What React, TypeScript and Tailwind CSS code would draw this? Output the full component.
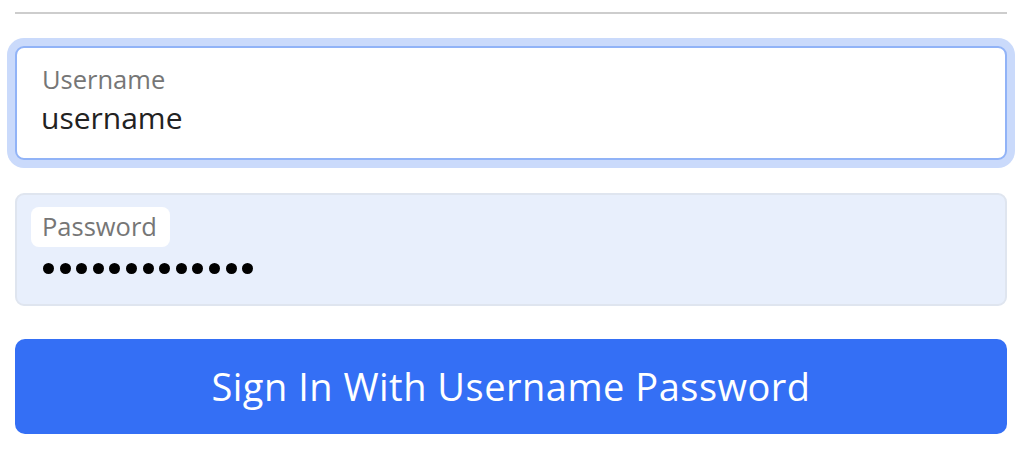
import React from "react";

export default function App() {
  const dots = Array.from({ length: 13 });
  return (
    <div
      className="w-[1024px] h-[466px] bg-white pl-[15px] pr-[17px] pt-[12px] flex flex-col"
      style={{ fontFamily: "'Open Sans', 'Noto Sans', sans-serif" }}
    >
      <div className="h-[2px] bg-[#cdcdcd]" />

      <div className="mt-[32px] h-[114px] rounded-[9px] border-2 border-[#91b3f7] ring-8 ring-[#cadafb] bg-white pl-[14px] pt-[12px] flex flex-col items-start">
        <div className="h-[40px] pl-[11px] pr-[13px] flex items-center rounded-[8px] text-[25.5px] text-[#767676] leading-none">
          Username
        </div>
        <div className="pl-[10px] mt-[0px] text-[30px] leading-[36px] text-[#222222]">
          username
        </div>
      </div>

      <div className="mt-[33px] h-[113px] rounded-[9px] border-2 border-[#dfe5ef] bg-[#e8effc] pl-[14px] pt-[12px] flex flex-col items-start">
        <div className="h-[40px] pl-[11px] pr-[13px] flex items-center rounded-[8px] bg-white text-[25.5px] text-[#767676] leading-none">
          Password
        </div>
        <div className="pl-[12px] mt-[16px] flex gap-[5.6px]" aria-label="password">
          {dots.map((_, i) => (
            <span key={i} className="w-[11px] h-[11px] rounded-full bg-black" />
          ))}
        </div>
      </div>

      <button className="mt-[33px] h-[95px] rounded-[10px] bg-[#346ff5] text-white text-[38px] tracking-[0.5px] flex items-center justify-center">
        Sign In With Username Password
      </button>
    </div>
  );
}
